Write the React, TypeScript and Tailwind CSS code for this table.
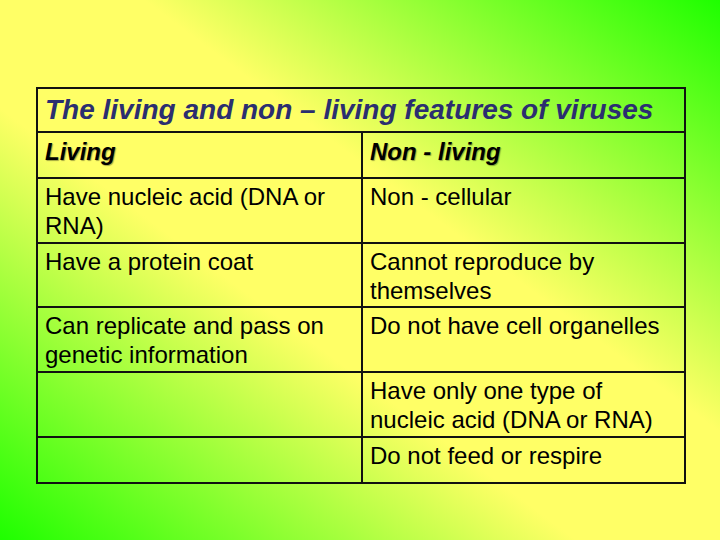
import React from "react";

type Row = {
    living: string;
    nonLiving: string;
    height: string;
};

const rows: Row[] = [
    { living: "Have nucleic acid (DNA or RNA)", nonLiving: "Non - cellular", height: "h-[65px]" },
    { living: "Have a protein coat", nonLiving: "Cannot reproduce by themselves", height: "h-[64px]" },
    { living: "Can replicate and pass on genetic information", nonLiving: "Do not have cell organelles", height: "h-[65px]" },
    { living: "", nonLiving: "Have only one type of nucleic acid (DNA or RNA)", height: "h-[65px]" },
    { living: "", nonLiving: "Do not feed or respire", height: "h-[44px]" },
];

export default function App(): React.ReactElement {
    return (
        <div className="h-[540px] w-[720px] overflow-hidden bg-[linear-gradient(to_top_right,#1eff00_0%,#ffff66_40%,#ffff66_60%,#1eff00_100%)] pl-[36px] pt-[87px] font-['Liberation_Sans',Arial,sans-serif] text-black">
            <div className="w-[650px] border-2 border-[#111]">
                {/* title */}
                <div className="h-[44px] border-b-2 border-[#111] px-[7px] pt-[4px] text-[28px] leading-[1.2] font-bold italic text-[#2b2e70]">
                    The living and non – living features of viruses
                </div>

                {/* column heads */}
                <div className="grid h-[46px] grid-cols-[325px_1fr] border-b-2 border-[#111] text-[24px] leading-[1.2] font-bold italic [text-shadow:1px_1px_1px_rgba(0,0,0,0.35)]">
                    <div className="border-r-2 border-[#111] px-[7px] pt-[5px]">Living</div>
                    <div className="px-[7px] pt-[5px]">Non - living</div>
                </div>

                {rows.map((row, i) => (
                    <div
                        key={i}
                        className={`grid grid-cols-[325px_1fr] text-[24px] leading-[1.2] ${row.height} ${
                            i < rows.length - 1 ? "border-b-2 border-[#111]" : ""
                        }`}
                    >
                        <div className="border-r-2 border-[#111] px-[7px] pt-[4px]">{row.living}</div>
                        <div className="px-[7px] pt-[4px]">{row.nonLiving}</div>
                    </div>
                ))}
            </div>
        </div>
    );
}
